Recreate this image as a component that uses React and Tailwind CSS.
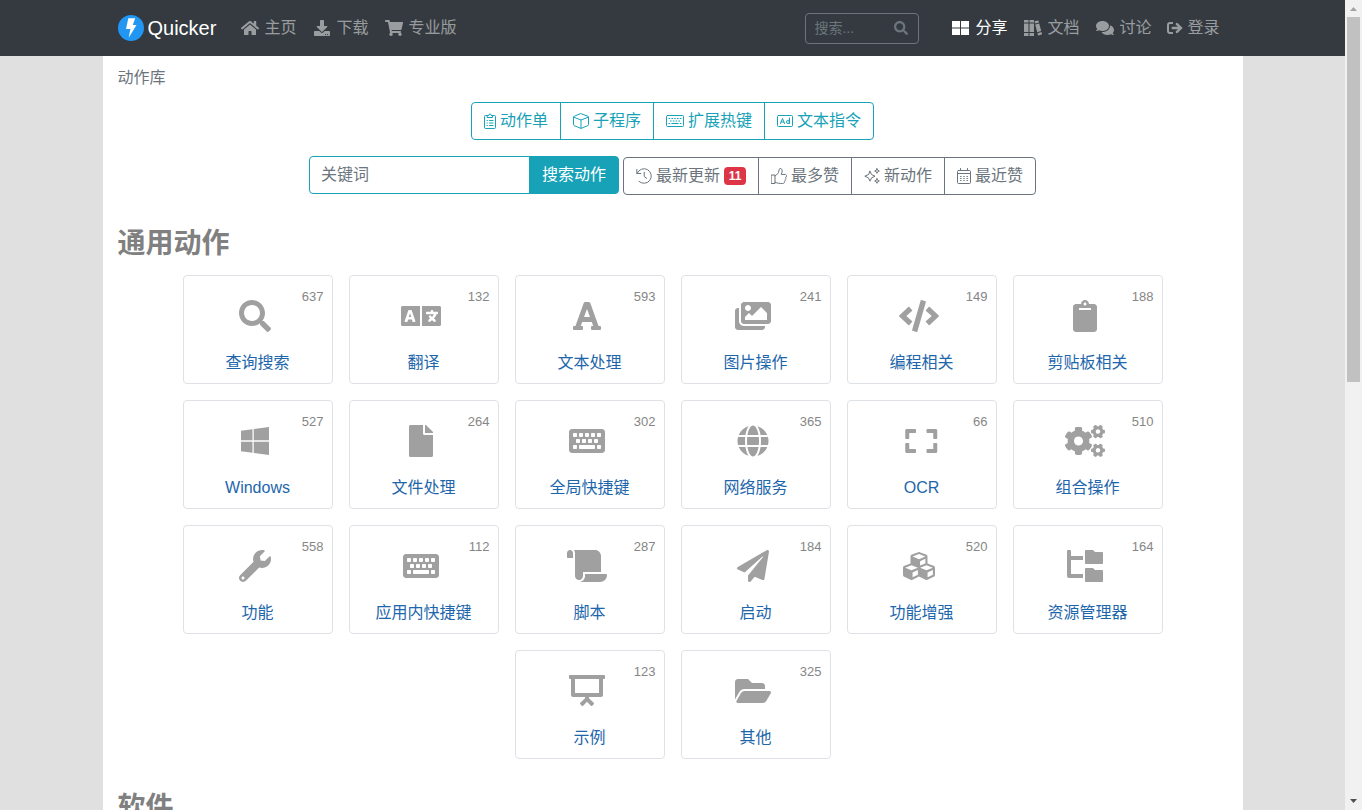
import {
  FaClipboard, FaCode, FaCogs, FaComments, FaCubes, FaDownload, FaFile, FaFolderOpen,
  FaFont, FaGlobe, FaHome, FaImages, FaKeyboard, FaLanguage, FaPaperPlane, FaScroll,
  FaSearch, FaShoppingCart, FaWindows, FaWrench,
} from "react-icons/fa";

function TilesIcon(props) {
  return (
    <svg viewBox="0 0 20 16" fill="currentColor" {...props}>
      <path d="M1 1h8v6.500H1ZM10 1h8v6.500h-8ZM1 8.500h8V15H1ZM10 8.500h8V15h-8Z" />
    </svg>
  );
}

function BooksIcon(props) {
  return (
    <svg viewBox="0 0 18 16" fill="currentColor" {...props}>
      <path d="M.5 0H4.500v2.500H0V.5A.5.5 0 0 1 .5 0ZM0 3.500h4.500v8.500H0ZM0 13h4.500v3H.5a.5.5 0 0 1-.5-.5ZM5.500 0h4.500v2.500H5.500ZM5.500 3.500H10v8.500H5.500ZM5.500 13H10v3H5.500Z" />
      <path d="m10.600 1.300 3.200-.9a.6.6 0 0 1 .7.4l.5 1.700-4 1.100ZM11.200 4.600l4-1.100 2 7.600-4 1.100ZM13.500 13.200l4-1.100.5 1.700a.6.6 0 0 1-.4.8l-3 .8a.6.6 0 0 1-.7-.4Z" />
    </svg>
  );
}

function SignOutIcon(props) {
  return (
    <svg viewBox="0 0 16 16" fill="currentColor" {...props}>
      <path d="M6 2.400v1.200a.4.4 0 0 1-.4.4H3a1 1 0 0 0-1 1v6a1 1 0 0 0 1 1h2.600a.4.4 0 0 1 .4.4v1.200a.4.4 0 0 1-.4.4H3a3 3 0 0 1-3-3V5a3 3 0 0 1 3-3h2.600a.4.4 0 0 1 .4.4Z" />
      <path d="m10.500 3.100 4.700 4.400a.7.7 0 0 1 0 1l-4.700 4.400a.75.75 0 0 1-1.100 0l-.5-.5a.75.75 0 0 1 0-1.100L11 9.200H5.300a.7.7 0 0 1-.7-.7v-1c0-.4.3-.7.7-.7H11L8.900 4.700a.75.75 0 0 1 0-1.100l.5-.5a.75.75 0 0 1 1.100 0Z" />
    </svg>
  );
}

function ExpandWideIcon(props) {
  return (
    <svg viewBox="-72 0 584 512" fill="currentColor" {...props}>
      <path d="M0 212V88c0-13.300 10.700-24 24-24h136c6.600 0 12 5.400 12 12v40c0 6.600-5.400 12-12 12H64v84c0 6.600-5.400 12-12 12H12c-6.600 0-12-5.400-12-12Zm340-136v40c0 6.600 5.400 12 12 12h96v84c0 6.600 5.400 12 12 12h40c6.600 0 12-5.400 12-12V88c0-13.300-10.700-24-24-24H352c-6.600 0-12 5.400-12 12Zm160 212h-40c-6.600 0-12 5.400-12 12v84h-96c-6.600 0-12 5.400-12 12v40c0 6.600 5.400 12 12 12h136c13.300 0 24-10.700 24-24V300c0-6.600-5.400-12-12-12ZM172 436v-40c0-6.600-5.400-12-12-12H64v-84c0-6.600-5.400-12-12-12H12c-6.600 0-12 5.400-12 12v124c0 13.300 10.700 24 24 24h136c6.600 0 12-5.400 12-12Z" />
    </svg>
  );
}

function FolderTreeIcon(props) {
  return (
    <svg viewBox="0 0 576 512" fill="currentColor" {...props}>
      <path d="M64 96V16c0-8.800-7.200-16-16-16H16C7.200 0 0 7.200 0 16v400c0 17.700 14.300 32 32 32h224v-64H64V160h192V96H64Z" />
      <path d="M560 32H448L416 0H304c-8.800 0-16 7.200-16 16v192c0 8.800 7.200 16 16 16h256c8.800 0 16-7.200 16-16V48c0-8.800-7.200-16-16-16Zm0 288H448l-32-32H304c-8.800 0-16 7.200-16 16v192c0 8.800 7.200 16 16 16h256c8.800 0 16-7.200 16-16V336c0-8.800-7.200-16-16-16Z" />
    </svg>
  );
}

function PresentationIcon(props) {
  return (
    <svg viewBox="0 0 576 512" fill="currentColor" {...props}>
      <path d="M560 0H16C7.200 0 0 7.200 0 16v32c0 8.800 7.200 16 16 16h16v256c0 17.700 14.300 32 32 32h192v18.800l-75 75a16 16 0 0 0 0 22.600l22.700 22.600a16 16 0 0 0 22.600 0l61.700-61.700 61.700 61.700a16 16 0 0 0 22.600 0l22.700-22.600a16 16 0 0 0 0-22.600l-75-75V352h192c17.700 0 32-14.300 32-32V64h16c8.800 0 16-7.200 16-16V16c0-8.800-7.200-16-16-16Zm-80 288H96V64h384v224Z" />
    </svg>
  );
}

// thin outline icons used inside the button groups
function LightIcon({ width = 16, children }) {
  return (
    <svg
      viewBox={`0 0 ${width} 16`}
      className="h-4 w-auto shrink-0"
      fill="none"
      stroke="currentColor"
      strokeLinecap="round"
      strokeLinejoin="round"
      aria-hidden="true"
    >
      {children}
    </svg>
  );
}

const ClipboardListIcon = () => (
  <LightIcon width={12}>
    <path d="M4 2.500H1.500a1 1 0 0 0-1 1v11a1 1 0 0 0 1 1h9a1 1 0 0 0 1-1v-11a1 1 0 0 0-1-1H8M3.500 4.500h5v-2H7.400a1.400 1.400 0 0 0-2.800 0H3.500ZM5.500 7.500H9M5.500 10H9M5.500 12.500H9M3 7.500h.4M3 10h.4M3 12.500h.4" />
  </LightIcon>
);

const CubeIcon = () => (
  <LightIcon>
    <path d="m8 .7 6.900 2.600a.8.8 0 0 1 .6.800v7.600a1 1 0 0 1-.6.900L8 15.400l-6.900-2.800a1 1 0 0 1-.6-.9V4.100a.8.800 0 0 1 .6-.8ZM.8 4.200 8 7l7.200-2.800M8 7v8.200" />
  </LightIcon>
);

const KeyboardIcon = () => (
  <LightIcon width={18}>
    <rect x=".5" y="2.500" width="17" height="11" rx="1" />
    <path d="M3 5.500h.8M5.800 5.500h.8M8.600 5.500h.8M11.400 5.500h.8M14.200 5.500h.8M4.400 8h.8M7.200 8h.8M10 8h.8M12.800 8h.8M3 10.500h.8M5.800 10.500h6.400M14.200 10.500h.8" />
  </LightIcon>
);

const AdIcon = () => (
  <LightIcon>
    <rect x=".5" y="2.500" width="15" height="11" rx="1" />
    <path d="m3.500 10.500 2-5 2 5M4.200 9h2.600M12.500 5v5.500" />
    <circle cx="11" cy="9" r="1.500" />
  </LightIcon>
);

const HistoryIcon = () => (
  <LightIcon>
    <path d="M.8 1.500v4h4M1.200 5.200A7.300 7.300 0 1 1 3 13.400M8.200 4.200v4.300l2.500 1.900" />
  </LightIcon>
);

const ThumbsUpIcon = () => (
  <LightIcon>
    <path d="M.5 7h3.500v8.500H.5ZM4 8c2.300-1.500 3.500-3 3.900-5C8.100 1.700 8.300.5 9.200.5c1.500 0 2 1.300 2 2.500s-.7 2.300-1 3.400h3.900c.8 0 1.400.7 1.400 1.500s-.4 1.200-.8 1.400c.4.8.2 1.800-.5 2.300.2.800-.1 1.600-.7 2 .1 1.200-.6 1.900-2 1.900-3 0-4.800-.1-7.500-1.300" />
  </LightIcon>
);

const SparklesIcon = () => (
  <LightIcon>
    <path d="m6 3.300 1.600 3.300L11 8.200 7.600 9.800 6 13.200 4.400 9.800.8 8.200l3.600-1.600ZM13 .7l.7 1.600 1.600.7-1.600.7L13 5.300l-.7-1.600-1.600-.7 1.600-.7ZM13 10.700l.7 1.600 1.600.7-1.600.7-.7 1.600-.7-1.600-1.600-.7 1.600-.7Z" />
  </LightIcon>
);

const CalendarIcon = () => (
  <LightIcon width={14}>
    <rect x=".5" y="2.500" width="13" height="13" rx="1" />
    <path d="M3.500.5v2M10.500.5v2M.5 5.500h13M3.500 8.500h.6M6.700 8.500h.6M9.900 8.500h.6M3.500 10.500h.6M6.700 10.500h.6M9.900 10.500h.6M3.500 12.500h.6M6.700 12.500h.6M9.900 12.500h.6" />
  </LightIcon>
);

const leftNav = [
  { label: "主页", icon: FaHome },
  { label: "下载", icon: FaDownload },
  { label: "专业版", icon: FaShoppingCart },
];

const rightNav = [
  { label: "分享", icon: TilesIcon, active: true },
  { label: "文档", icon: BooksIcon },
  { label: "讨论", icon: FaComments },
];

const libraries = [
  { label: "动作单", icon: ClipboardListIcon },
  { label: "子程序", icon: CubeIcon },
  { label: "扩展热键", icon: KeyboardIcon },
  { label: "文本指令", icon: AdIcon },
];

const filters = [
  { label: "最新更新", icon: HistoryIcon, badge: 11 },
  { label: "最多赞", icon: ThumbsUpIcon },
  { label: "新动作", icon: SparklesIcon },
  { label: "最近赞", icon: CalendarIcon },
];

const categories = [
  { label: "查询搜索", count: 637, icon: FaSearch },
  { label: "翻译", count: 132, icon: FaLanguage },
  { label: "文本处理", count: 593, icon: FaFont },
  { label: "图片操作", count: 241, icon: FaImages },
  { label: "编程相关", count: 149, icon: FaCode },
  { label: "剪贴板相关", count: 188, icon: FaClipboard },
  { label: "Windows", count: 527, icon: FaWindows },
  { label: "文件处理", count: 264, icon: FaFile },
  { label: "全局快捷键", count: 302, icon: FaKeyboard },
  { label: "网络服务", count: 365, icon: FaGlobe },
  { label: "OCR", count: 66, icon: ExpandWideIcon },
  { label: "组合操作", count: 510, icon: FaCogs },
  { label: "功能", count: 558, icon: FaWrench },
  { label: "应用内快捷键", count: 112, icon: FaKeyboard },
  { label: "脚本", count: 287, icon: FaScroll },
  { label: "启动", count: 184, icon: FaPaperPlane },
  { label: "功能增强", count: 520, icon: FaCubes },
  { label: "资源管理器", count: 164, icon: FolderTreeIcon },
  { label: "示例", count: 123, icon: PresentationIcon },
  { label: "其他", count: 325, icon: FaFolderOpen },
];

function NavLink({ label, icon: Icon, active }) {
  return (
    <a href="#" className={`flex items-center gap-1 ${active ? "text-white" : "text-white/50"}`}>
      <Icon className="h-4 w-5" aria-hidden="true" />
      {label}
    </a>
  );
}

function ButtonGroup({ items, className }) {
  return (
    <div className={`flex rounded border divide-x ${className}`}>
      {items.map(({ label, icon: Icon, badge }) => (
        <a key={label} href="#" className="flex h-9 items-center gap-1 px-3">
          <Icon />
          {label}
          {badge && (
            <span className="min-w-[22px] rounded bg-[#dc3545] px-1 text-center text-xs leading-[18px] font-bold text-white">
              {badge}
            </span>
          )}
        </a>
      ))}
    </div>
  );
}

function CategoryCard({ label, count, icon: Icon }) {
  return (
    <a
      href="#"
      className="relative flex w-[150px] flex-col items-center rounded border border-[#dee2e6] pt-6 pb-2 text-[#1d66ab]"
    >
      <Icon className="mr-1.5 h-8 w-10 text-[#a0a0a0]" aria-hidden="true" />
      <span className="mt-[19px] leading-6">{label}</span>
      <span className="absolute top-3 right-2 text-[13px] leading-[18px] text-[#868686]">{count}</span>
    </a>
  );
}

function Header() {
  return (
    <header className="bg-[#343a40]">
      <div className="mx-auto flex h-14 max-w-[1140px] items-center px-[15px]">
        <a href="#" className="flex items-center gap-1 text-xl text-white">
          <svg viewBox="0 0 26 26" className="size-[26px]" aria-hidden="true">
            <circle cx="13" cy="13" r="13" fill="#2196f3" />
            <path d="M10.300 3.300h6.900l-2.400 6.600h3.700L10.700 22.700l1.700-8.600H8Z" fill="#fff" />
          </svg>
          Quicker
        </a>
        <nav className="ml-6 flex gap-4">
          {leftNav.map((item) => (
            <NavLink key={item.label} {...item} />
          ))}
        </nav>
        <form className="mr-8 ml-auto flex h-[31px] w-[114px] items-center rounded border border-[#6c757d] px-2 text-sm text-[#6c757d]">
          <input
            type="text"
            aria-label="搜索"
            placeholder="搜索..."
            className="w-full min-w-0 bg-transparent outline-none placeholder:text-[#6c757d]"
          />
          <button type="button" aria-label="提交搜索" className="mr-0.5">
            <FaSearch />
          </button>
        </form>
        <nav className="mr-2 flex gap-4">
          {rightNav.map((item) => (
            <NavLink key={item.label} {...item} />
          ))}
          <a href="#" className="flex items-center gap-1 text-white/50">
            <SignOutIcon className="size-4" aria-hidden="true" />
            登录
          </a>
        </nav>
      </div>
    </header>
  );
}

function Scrollbar() {
  return (
    <div className="flex w-[17px] shrink-0 flex-col items-center bg-[#f1f1f1]" aria-hidden="true">
      <svg viewBox="0 0 17 17" className="size-[17px] shrink-0" fill="#a3a3a3">
        <path d="M5 11h7L8.500 7Z" />
      </svg>
      <div className="w-full flex-1 px-0.5">
        <div className="h-[47%] bg-[#c1c1c1]" />
      </div>
      <svg viewBox="0 0 17 17" className="size-[17px] shrink-0" fill="#505050">
        <path d="M5 6h7l-3.500 4Z" />
      </svg>
    </div>
  );
}

export default function App() {
  return (
    <div className="flex h-screen overflow-hidden bg-[#e0e0e0] font-['Liberation_Sans','Noto_Sans_CJK_SC',sans-serif] text-base">
      <div className="flex min-w-0 flex-1 flex-col">
        <Header />
        <main className="mx-auto w-full max-w-[1140px] flex-1 overflow-hidden bg-white px-[15px]">
          <p className="pt-2.5 leading-6 text-[#6c757d]">动作库</p>

          <div className="mt-3 flex justify-center">
            <ButtonGroup items={libraries} className="border-[#17a2b8] divide-[#17a2b8] text-[#17a2b8]" />
          </div>

          <div className="mt-4 flex flex-wrap items-end justify-center gap-1">
            <form className="mb-px flex">
              <input
                type="text"
                aria-label="关键词"
                placeholder="关键词"
                className="h-[38px] w-[221px] rounded-l border border-[#17a2b8] px-[11px] outline-none placeholder:text-[#6c757d]"
              />
              <button
                type="button"
                className="-ml-px h-[38px] rounded-r border border-[#17a2b8] bg-[#17a2b8] px-3 text-white"
              >
                搜索动作
              </button>
            </form>
            <ButtonGroup items={filters} className="border-[#6c757d] divide-[#6c757d] text-[#6c757d]" />
          </div>

          <h2 className="mt-8 mb-3.5 text-[28px] leading-[34px] font-bold text-[#808080]">通用动作</h2>
          <div className="flex flex-wrap justify-center gap-4">
            {categories.map((category) => (
              <CategoryCard key={category.label} {...category} />
            ))}
          </div>

          <h2 className="mt-8 mb-3.5 text-[28px] leading-[34px] font-bold text-[#808080]">软件</h2>
        </main>
      </div>
      <Scrollbar />
    </div>
  );
}
